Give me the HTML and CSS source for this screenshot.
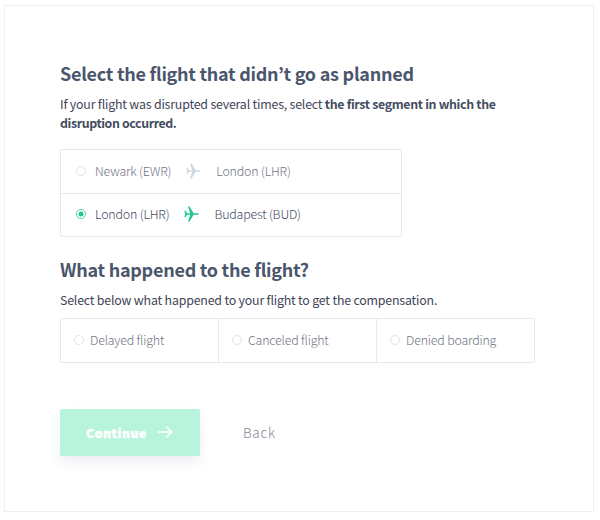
FILE: index.html
```html
<!DOCTYPE html>
<html lang="en">
    <head>
        <meta charset="utf-8">
        <title>Select your flight</title>
        <link rel="stylesheet" href="styles.css">
    </head>
    <body>
        <form class="card">
            <h2 class="heading">Select the flight that didn’t go as planned</h2>
            <p class="text">If your flight was disrupted several times, select <b>the first segment in which the<br><span class="tight">disruption occurred.</span></b></p>
            <div class="flights">
                <label class="flight">
                    <input type="radio" name="flight" class="radio">
                    <span class="from">Newark (EWR)</span>
                    <svg class="plane" viewBox="0 0 15 16"><path d="M.3 4.800h1.200L3.200 7.200h3L4 .6h1.500L9.600 7.200h3.800c.8 0 1.300.3 1.300.8s-.5.8-1.300.8H9.600L5.500 15.400H4L6.200 8.800h-3l-1.700 2.400H.3L1.200 8z"/></svg>
                    <span>London (LHR)</span>
                </label>
                <label class="flight selected">
                    <input type="radio" name="flight" class="radio" checked>
                    <span class="from">London (LHR)</span>
                    <svg class="plane" viewBox="0 0 15 16"><path d="M.3 4.800h1.200L3.200 7.200h3L4 .6h1.500L9.600 7.200h3.800c.8 0 1.300.3 1.300.8s-.5.8-1.300.8H9.600L5.500 15.400H4L6.200 8.800h-3l-1.700 2.400H.3L1.200 8z"/></svg>
                    <span>Budapest (BUD)</span>
                </label>
            </div>
            <h2 class="heading second">What happened to the flight?</h2>
            <p class="text sub">Select below what happened to your flight to get the compensation.</p>
            <div class="reasons">
                <label class="reason"><input type="radio" name="reason" class="radio">Delayed flight</label>
                <label class="reason"><input type="radio" name="reason" class="radio">Canceled flight</label>
                <label class="reason"><input type="radio" name="reason" class="radio">Denied boarding</label>
            </div>
            <div class="buttons">
                <button type="button" class="continue">Continue
                    <svg class="arrow" viewBox="0 0 16 12"><path d="M1 6h14M9.800 1l5.200 5-5.200 5"/></svg>
                </button>
                <a class="back">Back</a>
            </div>
        </form>
    </body>
</html>
```
FILE: styles.css
```css
*{
    box-sizing: border-box;
}
body{
    margin: 0;
    background-color: white;
    font-family: "Noto Sans CJK KR", "Noto Sans", sans-serif;
}
.card{
    width: 590px;
    height: 507px;
    margin: 5px 0 0 4px;
    padding: 53px 55px 0;
    border: 1px solid #edf0f4;
}
.heading{
    margin: 0;
    font-size: 18px;
    line-height: 28px;
    font-weight: 600;
    letter-spacing: -0.26px;
    color: #4a566c;
    white-space: nowrap;
}
.text{
    margin: 8px 0 0;
    font-size: 12.4px;
    line-height: 19px;
    letter-spacing: -0.2px;
    color: #3f4557;
    white-space: nowrap;
}
.text b{
    letter-spacing: -0.34px;
    color: #444d61;
}
.text .tight{
    letter-spacing: -0.4px;
}
.flights{
    width: 342px;
    margin-top: 16px;
    border: 1px solid #e4e7ed;
    border-radius: 2px;
}
.flight{
    display: flex;
    align-items: center;
    height: 43px;
    padding: 0 0 2px 15px;
    font-size: 12.4px;
    font-weight: 300;
    letter-spacing: -0.18px;
    color: #6f7484;
}
.flight + .flight{
    border-top: 1px solid #e4e7ed;
}
.selected{
    color: #434a60;
}
.radio{
    appearance: none;
    flex: none;
    width: 10px;
    height: 10px;
    margin: 0 9px 0 0;
    border: 1px solid #dfe4e8;
    border-radius: 50%;
}
.radio:checked{
    border-color: #4fd3a2;
    background: radial-gradient(circle, #22c98d 2.2px, white 2.8px);
}
.plane{
    width: 15px;
    height: 16px;
    margin: 0 15px;
    fill: #cdd9e1;
}
.selected .plane{
    fill: #22c98d;
}
.second{
    margin-top: 18px;
}
.sub{
    margin-top: 8px;
}
.reasons{
    display: flex;
    width: 475px;
    height: 45px;
    margin-top: 8px;
    border: 1px solid #e4e7ed;
    border-radius: 2px;
}
.reason{
    display: flex;
    flex: 1;
    align-items: center;
    padding: 0 0 1px 13px;
    font-size: 12.4px;
    font-weight: 300;
    letter-spacing: -0.18px;
    color: #6f7484;
}
.reason .radio{
    margin-right: 6px;
}
.reason + .reason{
    border-left: 1px solid #e4e7ed;
}
.buttons{
    display: flex;
    align-items: center;
    margin-top: 46px;
}
.continue{
    display: flex;
    align-items: center;
    width: 140px;
    height: 47px;
    padding: 0 0 1px 26px;
    border: none;
    border-radius: 2px;
    background-color: #b8f3dc;
    box-shadow: 0 6px 12px rgba(60, 80, 110, 0.09);
    color: white;
    font-family: inherit;
    font-size: 12px;
    font-weight: 900;
    letter-spacing: 0.65px;
    -webkit-text-stroke: 0.5px white;
}
.arrow{
    width: 16px;
    height: 12px;
    margin-left: 10px;
    fill: none;
    stroke: white;
    stroke-width: 1.5;
    stroke-linecap: round;
    stroke-linejoin: round;
}
.back{
    margin-left: 43px;
    padding-bottom: 2px;
    font-size: 13.5px;
    font-weight: 300;
    letter-spacing: 0.7px;
    color: #7f8998;
}
```
